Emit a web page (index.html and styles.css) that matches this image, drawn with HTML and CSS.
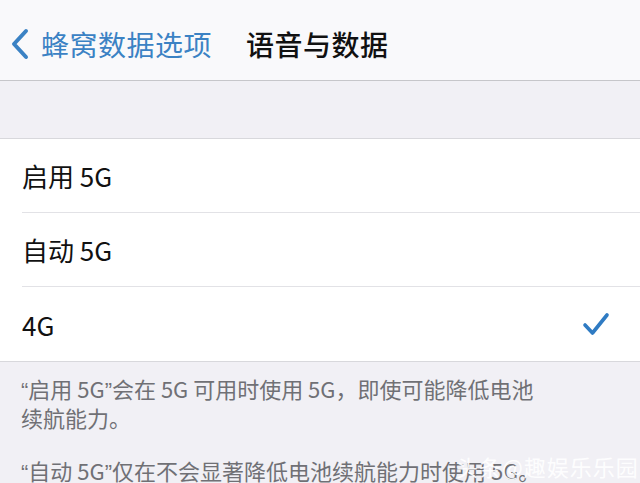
FILE: index.html
```html
<!DOCTYPE html>
<html lang="zh-CN">
<head>
<meta charset="utf-8">
<link rel="stylesheet" href="styles.css">
</head>
<body>
<div class="screen">
  <header class="nav">
    <div class="back">
      <svg class="chev" width="20" height="32" viewBox="0 0 20 32"><path d="M16 3 L4 16 L16 29" fill="none" stroke="#3b82c4" stroke-width="4" stroke-linecap="round" stroke-linejoin="round"/></svg>
      <span class="back-text">蜂窝数据选项</span>
    </div>
    <h1 class="title">语音与数据</h1>
  </header>
  <div class="band"></div>
  <ul class="list">
    <li class="row"><span>启用 5G</span></li>
    <li class="row"><span>自动 5G</span></li>
    <li class="row"><span>4G</span>
      <svg class="check" width="28" height="26" viewBox="0 0 28 26"><path d="M3 14 L10.5 22 L25 4" fill="none" stroke="#2f7bc3" stroke-width="3.6" stroke-linecap="round" stroke-linejoin="round"/></svg>
    </li>
  </ul>
  <div class="footer">
    <p><span class="q">“</span>启用 5G<span class="q">”</span>会在 5G 可用时使用 5G，即使可能降低电池<br>续航能力。</p>
    <p><span class="q">“</span>自动 5G<span class="q">”</span>仅在不会显著降低电池续航能力时使用 5G。</p>
    <span class="watermark">头条@趣娱乐乐园</span>
  </div>
</div>
</body>
</html>
```
FILE: styles.css
```css
* { box-sizing: border-box; }
html, body { margin: 0; padding: 0; }
body {
  width: 640px;
  height: 483px;
  overflow: hidden;
  background: #f1f0f5;
  font-family: "Noto Sans CJK SC", "Noto Sans", sans-serif;
}
.screen { position: relative; height: 483px; }
.nav {
  height: 81px;
  background: #f9f9fb;
  border-bottom: 1px solid #c6c6ca;
  display: flex;
  align-items: center;
  padding: 7px 0 0 10px;
}
.back { display: flex; align-items: center; gap: 11px; }
.chev { display: block; }
.back-text {
  color: #3b82c4;
  font-size: 28px;
  letter-spacing: 0.5px;
}
.title {
  margin: 0 0 0 34px;
  font-size: 28px;
  font-weight: 500;
  color: #111;
  letter-spacing: 0.5px;
}
.band { height: 57px; }
.list {
  list-style: none;
  margin: 0;
  padding: 0 0 0 22px;
  background: #fff;
  border-top: 1px solid #d8d8dc;
  border-bottom: 1px solid #d8d8dc;
}
.row {
  height: 74px;
  display: flex;
  align-items: center;
  justify-content: space-between;
  padding-right: 30px;
  font-size: 26px;
  color: #111;
  border-bottom: 1px solid #e2e2e6;
}
.row:last-child { border-bottom: none; }
.check { display: block; }
.footer {
  position: relative;
  padding: 13px 20px 0 21px;
  color: #707075;
  font-size: 22px;
  line-height: 26px;
}
.footer p { margin: 0 0 27px; }
.q { font-family: "Liberation Sans", sans-serif; }
.watermark {
  position: absolute;
  left: 456px;
  top: 91px;
  color: rgba(255,255,255,0.92);
  font-size: 22px;
  line-height: 26px;
  letter-spacing: 1px;
  white-space: nowrap;
}
```
